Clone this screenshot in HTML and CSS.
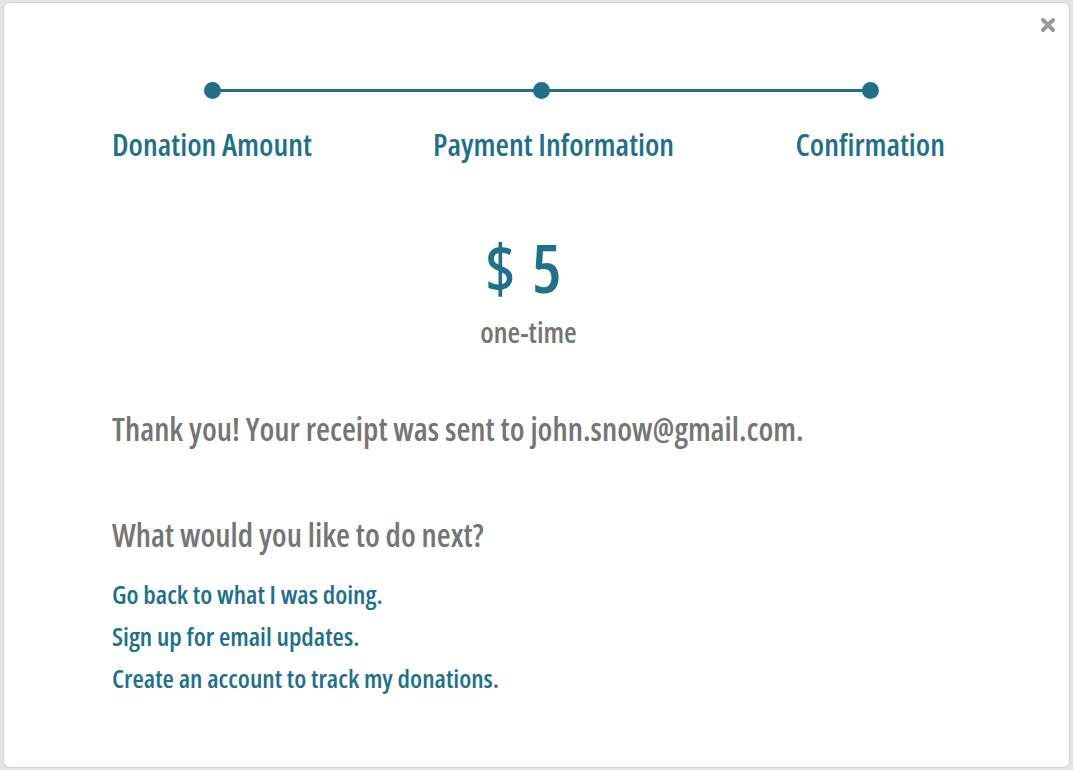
FILE: index.html
```html
<!DOCTYPE html>
<html lang="en">
<head>
<meta charset="utf-8">
<title>Donation confirmation</title>
<link rel="stylesheet" href="styles.css">
</head>
<body>
<div class="modal">
  <button class="close" aria-label="Close">
    <svg width="16" height="16" viewBox="0 0 16 16"><path d="M3 3 L13 13 M13 3 L3 13" stroke="#9a9a9a" stroke-width="4" stroke-linecap="round"/></svg>
  </button>
  <div class="content">
    <div class="progress">
      <div class="dots">
        <span class="dot"></span>
        <span class="dot"></span>
        <span class="dot"></span>
      </div>
      <div class="labels">
        <span class="label">Donation Amount</span>
        <span class="label">Payment Information</span>
        <span class="label">Confirmation</span>
      </div>
    </div>
    <div class="summary">
      <div class="amount">$ 5</div>
      <div class="freq">one-time</div>
    </div>
    <p class="thanks">Thank you! Your receipt was sent to john.snow@gmail.com.</p>
    <h2 class="next">What would you like to do next?</h2>
    <ul class="links">
      <li><a href="#">Go back to what I was doing.</a></li>
      <li><a href="#">Sign up for email updates.</a></li>
      <li><a href="#">Create an account to track my donations.</a></li>
    </ul>
  </div>
</div>
</body>
</html>
```
FILE: styles.css
```css
html, body {
  margin: 0;
  padding: 0;
}
body {
  background: #e4e4e4;
  font-family: "Open Sans", "DejaVu Sans Condensed", sans-serif;
  font-stretch: 75%;
  font-weight: 600;
  padding: 2px 3px;
}
.modal {
  position: relative;
  background: #fff;
  height: 766px;
  box-sizing: border-box;
  border: 1px solid #d2d2d2;
  border-radius: 7px;
}
.close {
  position: absolute;
  top: 14px;
  right: 13px;
  padding: 0;
  border: 0;
  background: none;
  width: 16px;
  height: 16px;
}
.close svg { display: block; }
.content {
  padding: 79px 0 0 108px;
}
.progress {
  width: 833px;
}
.dots {
  position: relative;
  display: flex;
  justify-content: space-between;
  margin: 0 66px 0 92px;
}
.dots::before {
  content: "";
  position: absolute;
  top: 7px;
  left: 8px;
  right: 8px;
  height: 3px;
  background: #21708a;
}
.dot {
  position: relative;
  width: 17px;
  height: 17px;
  border-radius: 50%;
  background: #21708a;
}
.labels {
  display: flex;
  justify-content: space-between;
  margin-top: 25px;
}
.label {
  font-size: 31px;
  line-height: 40px;
  color: #21708a;
}
.summary {
  width: 833px;
  text-align: center;
  margin-top: 67px;
}
.amount {
  font-size: 66px;
  line-height: 72px;
  word-spacing: 5px;
  padding-right: 10px;
  color: #21708a;
}
.freq {
  margin-top: 12px;
  font-size: 29px;
  line-height: 34px;
  color: #757575;
}
.thanks {
  margin: 60px 0 0;
  font-size: 32px;
  line-height: 40px;
  color: #757575;
}
.next {
  margin: 66px 0 0;
  font-size: 32px;
  line-height: 40px;
  font-weight: 600;
  color: #757575;
}
.links {
  list-style: none;
  margin: 18px 0 0;
  padding: 0;
}
.links li {
  font-size: 26px;
  line-height: 42px;
}
.links a {
  color: #21708a;
  text-decoration: none;
}
```
